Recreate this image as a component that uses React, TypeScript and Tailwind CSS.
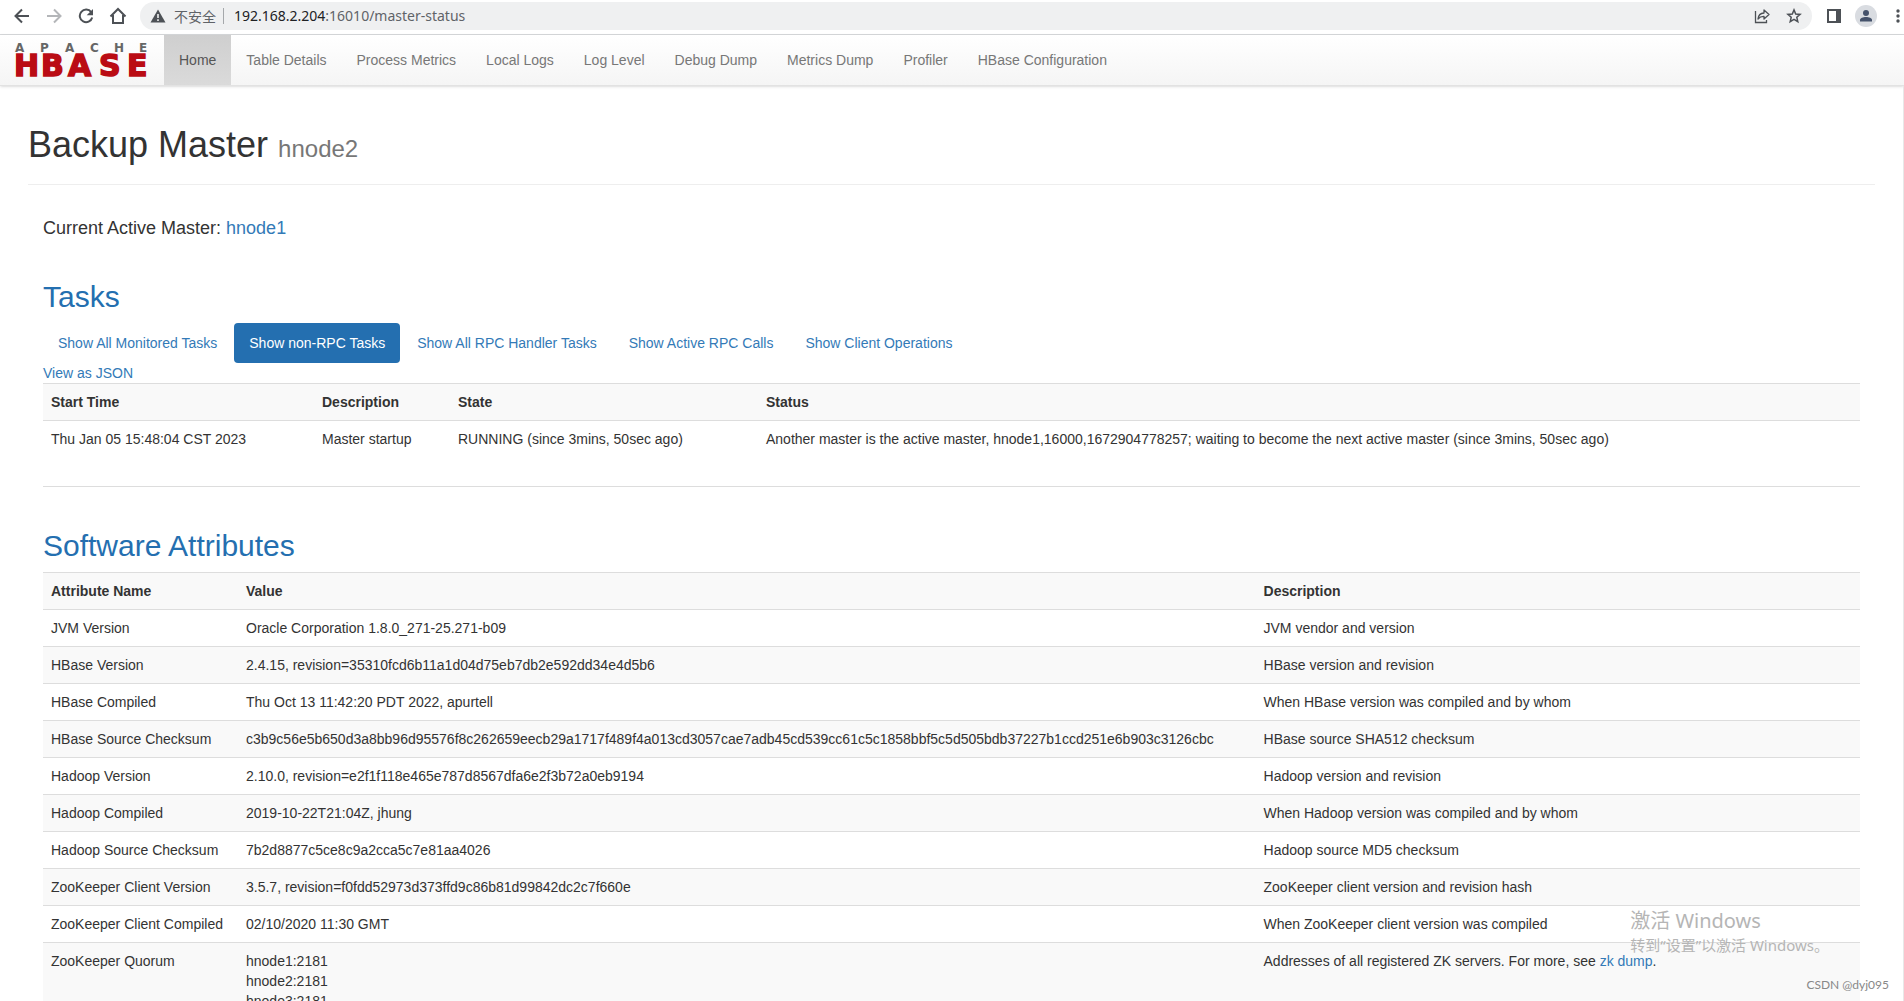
import { ReactNode } from "react";

const navItems = [
  "Home",
  "Table Details",
  "Process Metrics",
  "Local Logs",
  "Log Level",
  "Debug Dump",
  "Metrics Dump",
  "Profiler",
  "HBase Configuration",
];

const taskFilters = [
  "Show All Monitored Tasks",
  "Show non-RPC Tasks",
  "Show All RPC Handler Tasks",
  "Show Active RPC Calls",
  "Show Client Operations",
];

const attributes: { name: string; value: ReactNode; description: ReactNode }[] = [
  {
    name: "JVM Version",
    value: "Oracle Corporation 1.8.0_271-25.271-b09",
    description: "JVM vendor and version",
  },
  {
    name: "HBase Version",
    value: "2.4.15, revision=35310fcd6b11a1d04d75eb7db2e592dd34e4d5b6",
    description: "HBase version and revision",
  },
  {
    name: "HBase Compiled",
    value: "Thu Oct 13 11:42:20 PDT 2022, apurtell",
    description: "When HBase version was compiled and by whom",
  },
  {
    name: "HBase Source Checksum",
    value:
      "c3b9c56e5b650d3a8bb96d95576f8c262659eecb29a1717f489f4a013cd3057cae7adb45cd539cc61c5c1858bbf5c5d505bdb37227b1ccd251e6b903c3126cbc",
    description: "HBase source SHA512 checksum",
  },
  {
    name: "Hadoop Version",
    value: "2.10.0, revision=e2f1f118e465e787d8567dfa6e2f3b72a0eb9194",
    description: "Hadoop version and revision",
  },
  {
    name: "Hadoop Compiled",
    value: "2019-10-22T21:04Z, jhung",
    description: "When Hadoop version was compiled and by whom",
  },
  {
    name: "Hadoop Source Checksum",
    value: "7b2d8877c5ce8c9a2cca5c7e81aa4026",
    description: "Hadoop source MD5 checksum",
  },
  {
    name: "ZooKeeper Client Version",
    value: "3.5.7, revision=f0fdd52973d373ffd9c86b81d99842dc2c7f660e",
    description: "ZooKeeper client version and revision hash",
  },
  {
    name: "ZooKeeper Client Compiled",
    value: "02/10/2020 11:30 GMT",
    description: "When ZooKeeper client version was compiled",
  },
  {
    name: "ZooKeeper Quorum",
    value: (
      <>
        hnode1:2181
        <br />
        hnode2:2181
        <br />
        hnode3:2181
      </>
    ),
    description: (
      <>
        Addresses of all registered ZK servers. For more, see{" "}
        <a href="#zk" className="text-[#337ab7]">
          zk dump
        </a>
        .
      </>
    ),
  },
];

function BrowserBar() {
  return (
    <div className="flex h-[35px] shrink-0 items-center border-b border-[#d6d8da] bg-white pr-[2px] pb-[2px] pl-3 text-[#4d5156]">
      <button aria-label="Back" className="flex w-5 justify-center">
        <svg width="16" height="16" viewBox="0 0 16 16" fill="none" stroke="currentColor" strokeWidth="2">
          <path d="M15 8H2M8 1.5 1.5 8 8 14.5" />
        </svg>
      </button>
      <button aria-label="Forward" className="ml-3 flex w-5 justify-center text-[#b4b6b9]">
        <svg width="16" height="16" viewBox="0 0 16 16" fill="none" stroke="currentColor" strokeWidth="2">
          <path d="M1 8h13M8 1.5 14.5 8 8 14.5" />
        </svg>
      </button>
      <button aria-label="Reload" className="ml-3 flex w-5 justify-center">
        <svg width="16" height="16" viewBox="0 0 16 16" fill="none">
          <path d="M13.2 4.2A6.3 6.3 0 1 0 14.2 9.5" stroke="currentColor" strokeWidth="2" />
          <path d="M15 1v6.3H8.7z" fill="currentColor" />
        </svg>
      </button>
      <button aria-label="Home page" className="ml-3 flex w-5 justify-center">
        <svg width="18" height="18" viewBox="0 0 18 18" fill="none" stroke="currentColor" strokeWidth="2">
          <path d="M1.5 9.5 9 2l7.5 7.5M4 8v8h10V8" />
        </svg>
      </button>
      <div className="ml-3 flex h-7 flex-1 items-center rounded-full bg-[#eff0f1] pr-[10px] pl-[10px]">
        <svg width="16" height="14" viewBox="0 0 16 14">
          <path d="M8 0.5 15.5 13.5H0.5z" fill="currentColor" />
          <path d="M8 5v4M8 10.2v1.8" stroke="#eff0f1" strokeWidth="1.6" />
        </svg>
        <span className="ml-2 font-['Noto_Sans_CJK_SC',sans-serif] text-sm text-[#5f6368]">不安全</span>
        <span className="ml-[7px] h-4 w-px bg-[#a5a8ab]" />
        <span className="ml-[10px] font-['Noto_Sans',sans-serif] text-sm text-[#5f6368]">
          <span className="text-[#202124]">192.168.2.204</span>:16010/master-status
        </span>
        <button aria-label="Share" className="ml-auto">
          <svg width="16" height="16" viewBox="0 0 16 16" fill="none" stroke="currentColor" strokeWidth="1.3">
            <path d="M1.5 3v11.5H12.5V12" />
            <path d="M4 11c.4-4 2.6-5.8 6-6V2l5 4.6-5 4.4V8.3C7.5 8.2 5.6 9 4 11z" strokeLinejoin="round" />
          </svg>
        </button>
        <button aria-label="Bookmark" className="ml-4">
          <svg width="16" height="16" viewBox="0 0 16 16" fill="none" stroke="currentColor" strokeWidth="1.5">
            <path d="M8 1.9 9.7 6l4.4.4-3.3 2.9 1 4.3L8 11.3l-3.8 2.3 1-4.3L1.9 6.4 6.3 6z" />
          </svg>
        </button>
      </div>
      <button aria-label="Side panel" className="ml-[15px]">
        <svg width="14" height="14" viewBox="0 0 14 14">
          <path d="M0 0h14v14H0z" fill="currentColor" />
          <path d="M2 2h7v10H2z" fill="#fff" />
        </svg>
      </button>
      <button aria-label="Profile" className="ml-[14px]">
        <svg width="22" height="22" viewBox="0 0 22 22">
          <circle cx="11" cy="11" r="11" fill="#d9dce1" />
          <circle cx="11" cy="8" r="3" fill="#45526b" />
          <path d="M5 16.5V15c0-2 3-3 6-3s6 1 6 3v1.5z" fill="#45526b" />
        </svg>
      </button>
      <button aria-label="Menu" className="ml-[18px]">
        <svg width="7" height="14" viewBox="0 0 7 14" fill="currentColor">
          <circle cx="3" cy="2" r="1.7" />
          <circle cx="3" cy="7" r="1.7" />
          <circle cx="3" cy="12" r="1.7" />
        </svg>
      </button>
    </div>
  );
}

function Logo() {
  return (
    <svg
      width="134"
      height="34"
      viewBox="0 0 134 34"
      className="overflow-visible font-['DejaVu_Sans',sans-serif] font-bold"
    >
      <text x="0 25 50 75 99 124" y="9" fontSize="12" fill="#666">
        APACHE
      </text>
      <text x="-1 26 53 84 112" y="33" fontSize="30" fill="#ba0c14" stroke="#ba0c14" strokeWidth="1.5">
        HBASE
      </text>
    </svg>
  );
}

function NavBar() {
  return (
    <nav className="flex h-[51px] shrink-0 border-b border-[#e2e2e2] bg-linear-to-b from-white to-[#f5f5f5] shadow-sm">
      <a href="#top" aria-label="Apache HBase" className="px-[15px] pt-2">
        <Logo />
      </a>
      {navItems.map((item, i) => (
        <a
          key={item}
          href="#nav"
          className={
            i === 0
              ? "bg-linear-to-b from-[#cfcfcf] to-[#dadada] px-[15px] py-[15px] text-[#555]"
              : "px-[15px] py-[15px] text-[#777]"
          }
        >
          {item}
        </a>
      ))}
    </nav>
  );
}

function TasksTable() {
  return (
    <table className="w-full table-fixed text-left">
      <thead>
        <tr className="border-t border-[#ddd] bg-[#f9f9f9]">
          <th className="w-[271px] p-2">Start Time</th>
          <th className="w-[136px] p-2">Description</th>
          <th className="w-[308px] p-2">State</th>
          <th className="p-2">Status</th>
        </tr>
      </thead>
      <tbody>
        <tr className="h-[66px] border-y border-[#ddd] align-top">
          <td className="p-2">Thu Jan 05 15:48:04 CST 2023</td>
          <td className="p-2">Master startup</td>
          <td className="p-2">RUNNING (since 3mins, 50sec ago)</td>
          <td className="p-2">
            Another master is the active master, hnode1,16000,1672904778257; waiting to become the next active master
            (since 3mins, 50sec ago)
          </td>
        </tr>
      </tbody>
    </table>
  );
}

function AttributesTable() {
  return (
    <table className="w-full text-left">
      <thead>
        <tr className="border-t border-[#ddd] bg-[#f9f9f9]">
          <th className="w-[195px] p-2">Attribute Name</th>
          <th className="w-[56%] p-2">Value</th>
          <th className="p-2">Description</th>
        </tr>
      </thead>
      <tbody>
        {attributes.map((row) => (
          <tr key={row.name} className="border-t border-[#ddd] align-top even:bg-[#f9f9f9]">
            <td className="p-2">{row.name}</td>
            <td className="p-2">{row.value}</td>
            <td className="p-2">{row.description}</td>
          </tr>
        ))}
      </tbody>
    </table>
  );
}

export default function App() {
  return (
    <div className="relative flex h-screen flex-col overflow-hidden bg-white font-['Liberation_Sans',Arial,sans-serif] text-sm text-[#333]">
      <BrowserBar />
      <NavBar />
      <main className="min-h-0 flex-1 overflow-hidden border-r border-[#e8e8e8] px-7 pt-[39px]">
        <header className="border-b border-[#eee] pb-[19px]">
          <h1 className="text-4xl leading-10">
            Backup Master <small className="text-2xl leading-none text-[#777]">hnode2</small>
          </h1>
        </header>
        <div className="px-[15px]">
          <h4 className="mt-[33px] text-lg leading-5">
            Current Active Master:{" "}
            <a href="#hnode1" className="text-[#337ab7]">
              hnode1
            </a>
          </h4>

          <section className="mt-[42px]">
            <h2 className="mb-[10px] text-3xl leading-[33px] text-[#246fb0]">Tasks</h2>
            <div className="flex gap-[2px]">
              {taskFilters.map((label, i) => (
                <a
                  key={label}
                  href="#tasks"
                  className={
                    i === 1
                      ? "rounded bg-[#246fb0] px-[15px] py-[10px] text-white"
                      : "rounded px-[15px] py-[10px] text-[#337ab7]"
                  }
                >
                  {label}
                </a>
              ))}
            </div>
            <a href="#json" className="block text-[#337ab7]">
              View as JSON
            </a>
            <TasksTable />
          </section>

          <section className="mt-[42px]">
            <h2 className="mb-[10px] text-3xl leading-[33px] text-[#246fb0]">Software Attributes</h2>
            <AttributesTable />
          </section>
        </div>
      </main>

      <div className="pointer-events-none absolute right-[75px] bottom-[46px] font-['Noto_Sans','Noto_Sans_CJK_SC',sans-serif] text-[#b5b5b5]">
        <div className="text-xl leading-7">激活 Windows</div>
        <div className="text-[15px] leading-5">转到“设置”以激活 Windows。</div>
      </div>
      <div className="pointer-events-none absolute right-[15px] bottom-2 font-['Lato',sans-serif] text-xs leading-4 text-[#888]">
        CSDN @dyj095
      </div>
    </div>
  );
}
